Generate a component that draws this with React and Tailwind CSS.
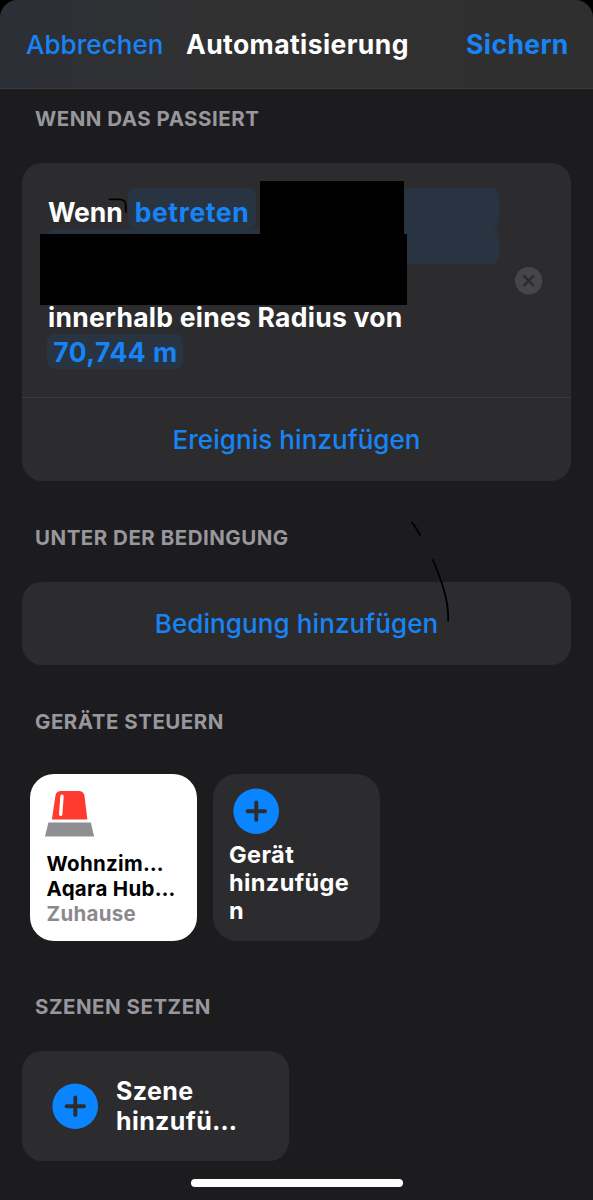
import React from 'react';

function SectionTitle({ children, className }) {
  return (
    <h2
      className={`pl-[35px] text-[20.5px] leading-6 font-bold tracking-[0.5px] text-[#98979e] whitespace-nowrap ${className}`}
    >
      {children}
    </h2>
  );
}

function PlusBadge({ className }) {
  return (
    <svg viewBox="0 0 46 46" className={`w-[46px] h-[46px] shrink-0 ${className}`}>
      <circle cx="23.2" cy="23.2" r="22.8" fill="#0b84ff" />
      <path
        d="M23.3 14.5v17.4M14.6 23.2h17.4"
        stroke="#2c2c2e"
        strokeWidth="3.9"
        strokeLinecap="round"
      />
    </svg>
  );
}

function SirenIcon() {
  return (
    <svg viewBox="0 0 50 48" className="w-[50px] h-[48px]">
      <path d="M10.4 5.8Q11 1 16.3 1h17.2q5.3 0 6 4.8l2.9 23.6H6.9z" fill="#ff3b30" />
      <path d="M17 6.2l-1.3 18.1" stroke="#fff" strokeWidth="3.4" strokeLinecap="round" />
      <path d="M3.4 32.4h42.5l3.2 14.2H0z" fill="#8e8e93" />
    </svg>
  );
}

export default function App() {
  return (
    <div className="bg-black font-['Inter',sans-serif]">
      <div className="relative flex flex-col w-[593px] h-[1200px] overflow-hidden rounded-t-[18px] bg-[#1c1c1e]">
        {/* Navigation */}
        <header className="h-[89px] shrink-0 grid grid-cols-[160px_1fr_160px] items-center px-[26px] border-b border-[#3a3a3c] bg-linear-to-r from-[#2c2f36] via-[#313132] via-35% to-[#2f2f30] text-[26px] whitespace-nowrap">
          <button className="text-left font-medium tracking-[0.05px] text-[#1784f6]">
            Abbrechen
          </button>
          <h1 className="justify-self-center pt-[2px] pr-px text-[26.5px] font-bold tracking-[0.4px] text-white">
            Automatisierung
          </h1>
          <button className="pt-[2px] pr-px text-right text-[26.5px] font-bold tracking-[0.4px] text-[#1784f6]">
            Sichern
          </button>
        </header>

        <SectionTitle className="mt-[18px]">WENN DAS PASSIERT</SectionTitle>
        <section className="mx-[22px] mt-[32px] h-[318px] shrink-0 rounded-[20px] bg-[#2c2c2e] flex flex-col">
          <div className="relative h-[235px] pt-[25px] pl-[25px] border-b border-[#3b3b3e] text-[26.5px] font-bold tracking-[0.25px] text-white whitespace-nowrap">
            <div className="w-[452px]">
              <div className="flex h-[41px] leading-[48px]">
                <span className="pl-px w-[81px] tracking-[-0.1px]">Wenn</span>
                <span className="w-[128px] rounded-[8px] bg-[#293443] text-center tracking-[0.6px] text-[#1784f6]">
                  betreten
                </span>
                <span className="ml-[5px] flex-1 rounded-[8px] bg-[#293443]" />
              </div>
              <div className="h-[35px] rounded-[8px] bg-[#293443]" />
              <div className="mt-[35px] h-[35px] pl-px leading-[37px]">
                innerhalb eines Radius von
              </div>
              <div className="w-[136px] h-[35px] pl-px rounded-[8px] bg-[#293443] text-center leading-[37px] tracking-[0.5px] text-[#1784f6]">
                70,744 m
              </div>
            </div>
            {/* Redacted address */}
            <div className="absolute left-[238px] top-[18px] w-[144px] h-[54px] bg-black" />
            <div className="absolute left-[18px] top-[71px] w-[367px] h-[71px] bg-black" />
            <svg viewBox="0 0 28 28" className="absolute left-[493px] top-[104px] w-7 h-7">
              <circle cx="13.7" cy="13.7" r="13.7" fill="#464649" />
              <path
                d="M9.2 9.2l9 9.2M18.2 9.2l-9 9.2"
                stroke="#2c2c2e"
                strokeWidth="2.6"
                strokeLinecap="round"
              />
            </svg>
          </div>
          <button className="flex-1 text-[26px] font-medium tracking-[0.07px] text-[#1784f6]">
            Ereignis hinzufügen
          </button>
        </section>

        <SectionTitle className="mt-[45px]">UNTER DER BEDINGUNG</SectionTitle>
        <section className="mx-[22px] mt-[32px] h-[83px] shrink-0 rounded-[20px] bg-[#2c2c2e] flex">
          <button className="flex-1 text-[26px] font-medium tracking-[0.1px] text-[#1784f6]">
            Bedingung hinzufügen
          </button>
        </section>

        <SectionTitle className="mt-[45px]">GERÄTE STEUERN</SectionTitle>
        <section className="mt-[40px] ml-[30px] flex gap-4">
          <div className="w-[167px] h-[167px] rounded-[24px] bg-white pt-[16px] pl-[15px] text-[20.5px] leading-[25px] font-bold tracking-[0.3px]">
            <SirenIcon />
            <div className="mt-[13px] pl-[1.5px] whitespace-nowrap">
              <p className="text-black">Wohnzim…</p>
              <p className="text-black">Aqara Hub…</p>
              <p className="text-[#8a8a8e]">Zuhause</p>
            </div>
          </div>
          <div className="w-[167px] h-[167px] rounded-[24px] bg-[#2c2c2e] pt-[14px] pl-[16px] text-[23.5px] leading-[28px] font-bold tracking-[0.4px] text-white">
            <PlusBadge className="ml-[4px]" />
            <p className="mt-[7px]">
              Gerät
              <br />
              hinzufüge
              <br />n
            </p>
          </div>
        </section>

        <SectionTitle className="mt-[54px]">SZENEN SETZEN</SectionTitle>
        <section className="mt-[32px] ml-[22px] w-[267px] h-[110px] shrink-0 rounded-[20px] bg-[#2c2c2e] flex items-center pl-[30px]">
          <PlusBadge />
          <p className="ml-[18px] mt-px text-[25px] leading-[29.5px] font-bold tracking-[0.4px] text-white">
            Szene
            <br />
            hinzufü…
          </p>
        </section>

        {/* Home indicator */}
        <div className="mt-[18px] self-center w-[212px] h-2 shrink-0 rounded-full bg-white" />

        {/* Pen strokes */}
        <svg
          viewBox="0 0 593 1200"
          className="absolute inset-0 w-[593px] h-[1200px] pointer-events-none"
          fill="none"
          stroke="#000"
          strokeWidth="1.8"
          strokeLinecap="round"
        >
          <path d="M109.5 199.3h9.5q6.8 0 6.8 6v6.5" />
          <path d="M412 522.5q4.5 5.5 8 12.5" />
          <path d="M433 560c7 17 16 39 15.2 60.5" />
        </svg>
      </div>
    </div>
  );
}
